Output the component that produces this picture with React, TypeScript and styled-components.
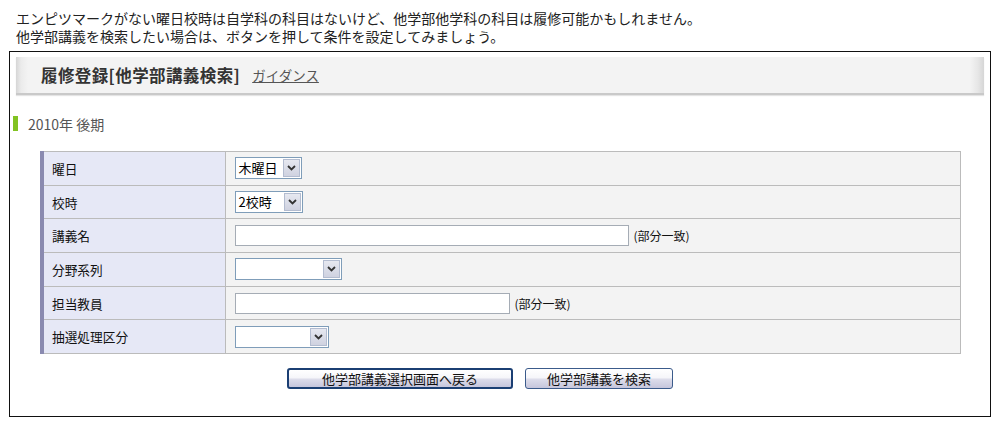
import React from "react";
import styled, { createGlobalStyle } from "styled-components";

const GlobalStyle = createGlobalStyle`
  html, body { margin: 0; padding: 0; background: #fff; }
  body {
    font-family: "Noto Sans CJK JP", "Noto Sans", sans-serif;
    color: #222;
  }
`;

const Page = styled.div`
  padding: 9px 9px 0 9px;
  width: 982px;
`;

const Intro = styled.div`
  padding-left: 7px;
  font-size: 14px;
  line-height: 18px;
  color: #222;
`;

const Box = styled.div`
  margin-top: 6px;
  border: 1px solid #111;
  height: 364px;
  box-sizing: content-box;
  display: flex;
  flex-direction: column;
`;

const HeaderBar = styled.div`
  margin: 5px 6px 0 6px;
  height: 36px;
  display: flex;
  align-items: center;
  gap: 12px;
  padding-left: 25px;
  background: linear-gradient(
    to right,
    #d6d6d6 0,
    #ebebeb 5px,
    #f3f3f3 12px,
    #f3f3f3 calc(100% - 14px),
    #e6e6e6 calc(100% - 6px),
    #d6d6d6 100%
  );
  border-bottom: 2px solid #c9c9c9;
  box-shadow: 0 1px 1px #e4e4e4;
`;

const Title = styled.h1`
  margin: 0;
  font-size: 16.5px;
  font-weight: bold;
  color: #333;
  letter-spacing: 0.4px;
`;

const GuideLink = styled.a`
  font-size: 13.5px;
  color: #555;
  text-decoration: underline;
  cursor: pointer;
`;

const SectionHeading = styled.div`
  margin: 21px 0 0 3px;
  display: flex;
  align-items: center;
  gap: 10px;
  height: 15px;
  font-size: 14px;
  color: #555;
`;

const GreenBar = styled.span`
  width: 5px;
  height: 15px;
  background: #82c322;
`;

const Table = styled.table`
  margin: 20px 0 0 30px;
  width: 921px;
  border-collapse: collapse;
  border: 1px solid #bbbbbb;
  table-layout: fixed;
`;

const Row = styled.tr`
  height: 33.7px;
`;

const LabelCell = styled.th`
  text-align: left;
  font-weight: normal;
  font-size: 12.7px;
  color: #111;
  background: #e6e8f6;
  border: 1px solid #bbbbbb;
  border-left: 4px solid #8a8ab0;
  padding: 0 0 0 8px;
`;

const ValueCell = styled.td`
  background: #f3f3f3;
  border: 1px solid #bbbbbb;
  padding: 0 0 0 9px;
`;

const CellLine = styled.div`
  display: flex;
  align-items: center;
  gap: 5px;
`;

const SelectBox = styled.div<{ $w: number }>`
  width: ${(p) => p.$w}px;
  height: 22px;
  box-sizing: border-box;
  border: 1px solid #7f9db9;
  background: #fff;
  display: flex;
  align-items: stretch;
`;

const SelectText = styled.span`
  flex: 1;
  font-size: 13px;
  line-height: 20px;
  padding-left: 3px;
  color: #000;
`;

const ArrowButton = styled.span`
  width: 17px;
  box-sizing: border-box;
  margin: 1px;
  border: 1px solid #b3bcd0;
  background: linear-gradient(to bottom, #e6e8f0, #cfd2e0);
  display: flex;
  align-items: center;
  justify-content: center;
`;

const TextInput = styled.input<{ $w: number }>`
  width: ${(p) => p.$w}px;
  height: 21px;
  box-sizing: border-box;
  border: 1px solid #a5acb5;
  background: #fff;
  margin: 0;
  padding: 0 3px;
  font-family: inherit;
  font-size: 13px;
`;

const Note = styled.span`
  font-size: 12px;
  color: #111;
`;

const ButtonRow = styled.div`
  margin-top: 14px;
  display: flex;
  justify-content: center;
  gap: 12px;
  padding-right: 40px;
`;

const Button = styled.button<{ $w: number; $primary?: boolean }>`
  width: ${(p) => p.$w}px;
  height: 21px;
  box-sizing: border-box;
  padding: 0;
  font-family: inherit;
  font-size: 13px;
  line-height: 17px;
  color: #111;
  border: ${(p) => (p.$primary ? "2px solid #1b3f73" : "1px solid #3b5b8b")};
  border-radius: 3px;
  background: linear-gradient(to bottom, #ffffff 0%, #f6f6fa 45%, #dcdcea 55%, #c6c6dc 100%);
  cursor: pointer;
`;

const Chevron = () => (
  <svg width="9" height="6" viewBox="0 0 9 6">
    <path d="M1 1 L4.5 4.5 L8 1" fill="none" stroke="#333" strokeWidth="1.8" />
  </svg>
);

const Select = ({ w, value }: { w: number; value?: string }) => (
  <SelectBox $w={w}>
    <SelectText>{value ?? ""}</SelectText>
    <ArrowButton>
      <Chevron />
    </ArrowButton>
  </SelectBox>
);

export default function App() {
  return (
    <>
      <GlobalStyle />
      <Page>
        <Intro>
          エンピツマークがない曜日校時は自学科の科目はないけど、他学部他学科の科目は履修可能かもしれません。
          <br />
          他学部講義を検索したい場合は、ボタンを押して条件を設定してみましょう。
        </Intro>
        <Box>
          <HeaderBar>
            <Title>履修登録[他学部講義検索]</Title>
            <GuideLink>ガイダンス</GuideLink>
          </HeaderBar>
          <SectionHeading>
            <GreenBar />
            2010年 後期
          </SectionHeading>
          <Table>
            <colgroup>
              <col style={{ width: 183 }} />
              <col />
            </colgroup>
            <tbody>
              <Row>
                <LabelCell>曜日</LabelCell>
                <ValueCell>
                  <Select w={67} value="木曜日" />
                </ValueCell>
              </Row>
              <Row>
                <LabelCell>校時</LabelCell>
                <ValueCell>
                  <Select w={68} value="2校時" />
                </ValueCell>
              </Row>
              <Row>
                <LabelCell>講義名</LabelCell>
                <ValueCell>
                  <CellLine>
                    <TextInput $w={394} />
                    <Note>(部分一致)</Note>
                  </CellLine>
                </ValueCell>
              </Row>
              <Row>
                <LabelCell>分野系列</LabelCell>
                <ValueCell>
                  <Select w={107} />
                </ValueCell>
              </Row>
              <Row>
                <LabelCell>担当教員</LabelCell>
                <ValueCell>
                  <CellLine>
                    <TextInput $w={275} />
                    <Note>(部分一致)</Note>
                  </CellLine>
                </ValueCell>
              </Row>
              <Row>
                <LabelCell>抽選処理区分</LabelCell>
                <ValueCell>
                  <Select w={94} />
                </ValueCell>
              </Row>
            </tbody>
          </Table>
          <ButtonRow>
            <Button $w={226} $primary>
              他学部講義選択画面へ戻る
            </Button>
            <Button $w={148}>他学部講義を検索</Button>
          </ButtonRow>
        </Box>
      </Page>
    </>
  );
}
